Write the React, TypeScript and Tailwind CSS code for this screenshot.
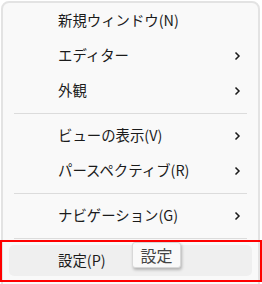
import React from 'react';

type Item = { label: string; sub?: boolean } | { sep: true };

const items: Item[] = [
  { label: '新規ウィンドウ(N)' },
  { label: 'エディター', sub: true },
  { label: '外観', sub: true },
  { sep: true },
  { label: 'ビューの表示(V)', sub: true },
  { label: 'パースペクティブ(R)', sub: true },
  { sep: true },
  { label: 'ナビゲーション(G)', sub: true },
  { sep: true },
];

function Chevron() {
  return (
    <svg width="8" height="12" viewBox="0 0 8 12" className="shrink-0">
      <path d="M2.5 2.5 L6 6 L2.5 9.5" fill="none" stroke="#1b1b1b" strokeWidth="1.5" />
    </svg>
  );
}

export default function App() {
  return (
    <div
      className="relative w-[262px] h-[284px] overflow-hidden bg-white text-[#1b1b1b]"
      style={{ fontFamily: '"Noto Sans CJK JP", "Noto Sans", sans-serif' }}
    >
      <div className="ml-[1px] mt-[1px] w-[259px] h-[290px] rounded-[8px] border-2 border-[#e3e3e3] bg-[#f9f9f9]">
        {items.map((it, i) =>
          'sep' in it ? (
            <div key={i} className="h-[10px] flex items-center px-[11px]">
              <div className="h-px w-full bg-[#dcdcdc]" />
            </div>
          ) : (
            <div key={i} className="h-[35px] flex items-center pl-[55px] pr-[17px]">
              <span className="flex-1 text-[14.4px] leading-none">{it.label}</span>
              {it.sub && <Chevron />}
            </div>
          ),
        )}
        <div className="h-[35px] py-[2px] px-[6px]">
          <div className="h-full rounded-[5px] bg-[#efefef] flex items-center pl-[49px]">
            <span className="text-[14.4px] leading-none">設定(P)</span>
          </div>
        </div>
      </div>

      <div className="absolute left-0 top-[240px] w-[262px] h-[42px] border-2 border-[#ff0000]" />

      <div className="absolute left-[132px] top-[242px] w-[49px] h-[26px] rounded-[3px] border border-[#d8d8d8] bg-[#f9f9f9] shadow-[1px_2px_3px_rgba(0,0,0,0.25)] flex items-center justify-center">
        <span className="text-[16px] leading-none text-[#444]">設定</span>
      </div>
    </div>
  );
}
